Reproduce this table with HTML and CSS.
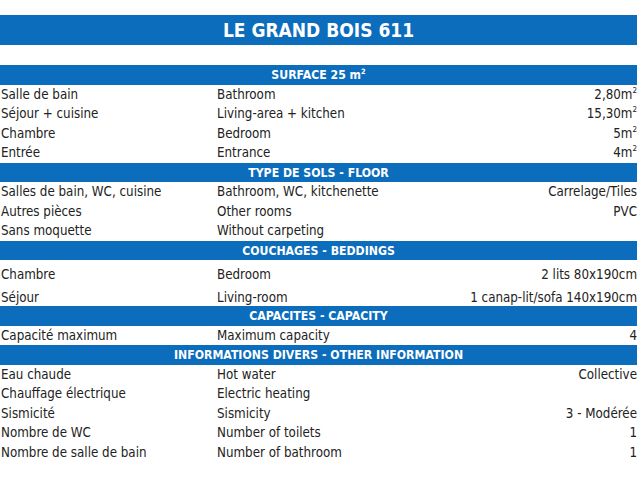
FILE: index.html
```html
<!DOCTYPE html>
<html lang="fr">
<head>
<meta charset="utf-8">
<title>Le Grand Bois 611</title>
<link rel="stylesheet" href="styles.css">
</head>
<body>
<div class="sheet">
  <h1 class="title">LE GRAND BOIS 611</h1>

  <div class="table">
    <div class="section">SURFACE 25 m<sup>2</sup></div>
    <div class="row"><span>Salle de bain</span><span>Bathroom</span><span class="val">2,80m<sup>2</sup></span></div>
    <div class="row"><span>Séjour + cuisine</span><span>Living-area + kitchen</span><span class="val">15,30m<sup>2</sup></span></div>
    <div class="row"><span>Chambre</span><span>Bedroom</span><span class="val">5m<sup>2</sup></span></div>
    <div class="row"><span>Entrée</span><span>Entrance</span><span class="val">4m<sup>2</sup></span></div>

    <div class="section">TYPE DE SOLS - FLOOR</div>
    <div class="row"><span>Salles de bain, WC, cuisine</span><span>Bathroom, WC, kitchenette</span><span class="val">Carrelage/Tiles</span></div>
    <div class="row"><span>Autres pièces</span><span>Other rooms</span><span class="val">PVC</span></div>
    <div class="row"><span>Sans moquette</span><span>Without carpeting</span><span class="val"></span></div>

    <div class="section">COUCHAGES - BEDDINGS</div>
    <div class="row tall"><span>Chambre</span><span>Bedroom</span><span class="val">2 lits 80x190cm</span></div>
    <div class="row tall"><span>Séjour</span><span>Living-room</span><span class="val">1 canap-lit/sofa 140x190cm</span></div>

    <div class="section">CAPACITES - CAPACITY</div>
    <div class="row"><span>Capacité maximum</span><span>Maximum capacity</span><span class="val">4</span></div>

    <div class="section">INFORMATIONS DIVERS - OTHER INFORMATION</div>
    <div class="row"><span>Eau chaude</span><span>Hot water</span><span class="val">Collective</span></div>
    <div class="row"><span>Chauffage électrique</span><span>Electric heating</span><span class="val"></span></div>
    <div class="row"><span>Sismicité</span><span>Sismicity</span><span class="val">3 - Modérée</span></div>
    <div class="row"><span>Nombre de WC</span><span>Number of toilets</span><span class="val">1</span></div>
    <div class="row"><span>Nombre de salle de bain</span><span>Number of bathroom</span><span class="val">1</span></div>
  </div>
</div>
</body>
</html>
```

FILE: styles.css
```css
html, body {
  margin: 0;
  padding: 0;
  background: #ffffff;
}

body {
  font-family: "DejaVu Sans Condensed", "Liberation Sans", sans-serif;
  color: #222222;
}

.sheet {
  width: 637px;
  padding-top: 15px;
}

.title {
  margin: 0 0 20px 0;
  height: 30px;
  line-height: 31px;
  background: #0c6dbd;
  color: #ffffff;
  text-align: center;
  font-size: 19px;
  font-weight: bold;
}

.table {
  display: flex;
  flex-direction: column;
}

.section {
  height: 19.5px;
  line-height: 20px;
  background: #0c6dbd;
  color: #ffffff;
  text-align: center;
  font-weight: bold;
  font-size: 12.2px;
}

.row {
  display: grid;
  grid-template-columns: 216px 1fr auto;
  align-items: center;
  height: 19.5px;
  font-size: 13.25px;
  padding-left: 1px;
}

.row.tall {
  height: 23px;
  align-items: end;
  padding-bottom: 1.5px;
  box-sizing: border-box;
}

.val {
  text-align: right;
}

sup {
  font-size: 0.6em;
  line-height: 0;
  vertical-align: 0.75em;
}
```
